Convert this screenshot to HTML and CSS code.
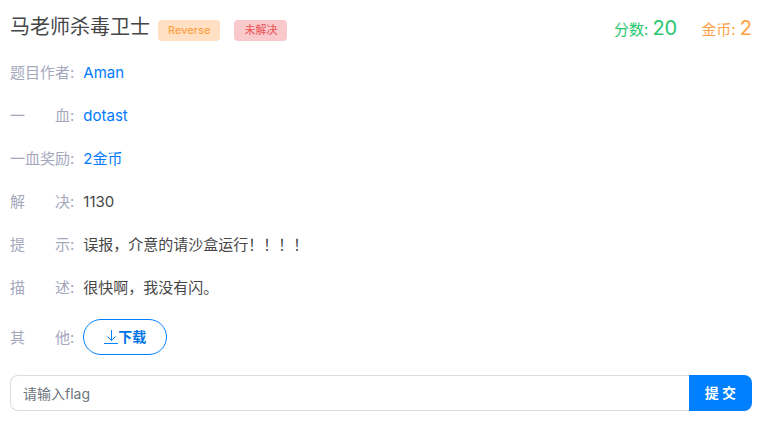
FILE: index.html
```html
<!DOCTYPE html>
<html lang="zh-CN">

<head>
    <meta charset="UTF-8">
    <meta name="viewport" content="width=device-width, initial-scale=1.0">
    <title>马老师杀毒卫士</title>
    <link rel="stylesheet" href="styles.css">
</head>

<body>
    <div class="challenge">
        <div class="challenge-header">
            <h1 class="title">马老师杀毒卫士</h1>
            <div class="badges">
                <span class="badge badge-warning">Reverse</span>
                <span class="badge badge-danger">未解决</span>
            </div>
            <div class="stats">
                <span class="score">分数: <span class="number">20</span></span>
                <span class="coin">金币: <span class="number">2</span></span>
            </div>
        </div>

        <dl class="info">
            <div class="info-row">
                <dt>题目作者:</dt>
                <dd><a href="#">Aman</a></dd>
            </div>
            <div class="info-row">
                <dt>一　　血:</dt>
                <dd><a href="#">dotast</a></dd>
            </div>
            <div class="info-row">
                <dt>一血奖励:</dt>
                <dd class="reward">2金币</dd>
            </div>
            <div class="info-row">
                <dt>解　　决:</dt>
                <dd>1130</dd>
            </div>
            <div class="info-row">
                <dt>提　　示:</dt>
                <dd>误报，介意的请沙盒运行！！！！</dd>
            </div>
            <div class="info-row">
                <dt>描　　述:</dt>
                <dd>很快啊，我没有闪。</dd>
            </div>
            <div class="info-row">
                <dt>其　　他:</dt>
                <dd>
                    <button type="button" class="download-btn">
                        <svg class="download-icon" width="14" height="14" viewBox="0 0 14 14" fill="none" stroke="currentColor" aria-hidden="true">
                            <path d="M7.5 0v10.5M3.5 6.5l4 4 4-4M0 13.5h14" />
                        </svg>下载
                    </button>
                </dd>
            </div>
        </dl>

        <form class="flag-form" onsubmit="return false">
            <input type="text" class="flag-input" placeholder="请输入flag" aria-label="请输入flag">
            <button type="submit" class="submit-btn">提 交</button>
        </form>
    </div>
</body>

</html>
```

FILE: styles.css
```css
body {
    margin: 0;
    padding: 12px 20px 20px 10px;
    background-color: #fff;
    color: #464646;
    font-family: Inter, "Noto Sans CJK SC", sans-serif;
    font-size: 15px;
    line-height: 23px;
}

a {
    color: #007bff;
    text-decoration: none;
}

.challenge-header {
    display: flex;
    align-items: center;
    min-height: 30px;
}

.title {
    margin: 0;
    font-size: 20px;
    font-weight: 400;
    line-height: 30px;
}

.badges {
    display: flex;
    gap: 14px;
    margin-left: 8px;
    padding-top: 6px;
}

.badge {
    padding: 0 10px;
    border-radius: 4px;
    font-size: 11px;
    font-weight: 500;
    line-height: 21px;
}

.badge-warning {
    background-color: #ffe0c3;
    color: #ff9f43;
}

.badge-danger {
    background-color: #f9c9cc;
    color: #ea5455;
    font-weight: 400;
}

.stats {
    display: flex;
    gap: 24px;
    margin-left: auto;
    padding-top: 4px;
}

.number {
    font-size: 20px;
}

.score {
    color: #28c76f;
}

.coin {
    color: #ff9f43;
}

.info {
    display: flex;
    flex-direction: column;
    gap: 20px;
    margin: 19px 0 20px;
}

.info-row {
    display: flex;
    align-items: center;
    gap: 9px;
}

.info dt {
    color: #a5a8bd;
}

.info dd {
    margin: 0;
}

.info .reward {
    color: #007bff;
}

.download-btn {
    display: flex;
    align-items: center;
    height: 36px;
    padding: 0 20px;
    border: 1px solid #0080ff;
    border-radius: 18px;
    background-color: #fff;
    color: #0073e6;
    font: inherit;
    font-size: 14px;
    font-weight: 700;
    line-height: 20px;
    cursor: pointer;
}

.download-icon {
    color: #0080ff;
}

.flag-form {
    display: flex;
}

.flag-input {
    flex: 1;
    min-width: 0;
    height: 36px;
    box-sizing: border-box;
    padding: 0 12px;
    border: 1px solid #dcdcdc;
    border-right: none;
    border-radius: 8px 0 0 8px;
    color: #464646;
    font: inherit;
    font-size: 14px;
    outline: none;
}

.flag-input::placeholder {
    color: #6c757d;
}

.submit-btn {
    height: 36px;
    padding: 0 16px;
    border: none;
    border-radius: 0 8px 8px 0;
    background-color: #0080ff;
    color: #fff;
    font: inherit;
    font-size: 14px;
    font-weight: 700;
    line-height: 20px;
    cursor: pointer;
}
```
